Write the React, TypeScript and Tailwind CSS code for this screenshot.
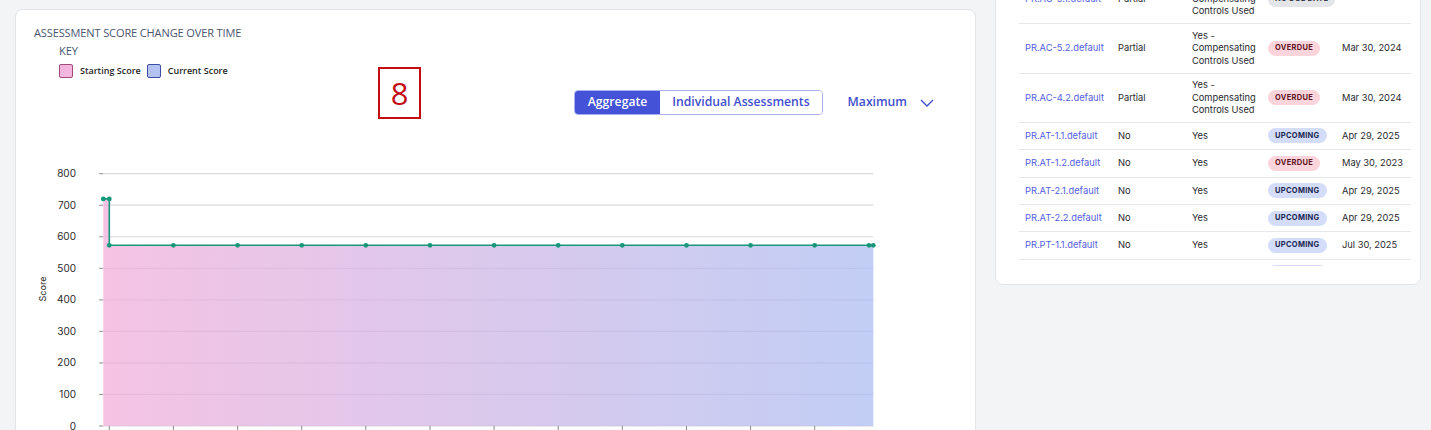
import React from "react";

const rows = [
  { id: "PR.AC-5.1.default", impl: "Partial", rem: "Yes - Compensating Controls Used", status: "NO DUE DATE", date: "" },
  { id: "PR.AC-5.2.default", impl: "Partial", rem: "Yes - Compensating Controls Used", status: "OVERDUE", date: "Mar 30, 2024" },
  { id: "PR.AC-4.2.default", impl: "Partial", rem: "Yes - Compensating Controls Used", status: "OVERDUE", date: "Mar 30, 2024" },
  { id: "PR.AT-1.1.default", impl: "No", rem: "Yes", status: "UPCOMING", date: "Apr 29, 2025" },
  { id: "PR.AT-1.2.default", impl: "No", rem: "Yes", status: "OVERDUE", date: "May 30, 2023" },
  { id: "PR.AT-2.1.default", impl: "No", rem: "Yes", status: "UPCOMING", date: "Apr 29, 2025" },
  { id: "PR.AT-2.2.default", impl: "No", rem: "Yes", status: "UPCOMING", date: "Apr 29, 2025" },
  { id: "PR.PT-1.1.default", impl: "No", rem: "Yes", status: "UPCOMING", date: "Jul 30, 2025" },
  { id: "PR.PT-2.1.default", impl: "No", rem: "Yes", status: "UPCOMING", date: "Jul 30, 2025" },
];

function Badge({ status }: { status: string }) {
  const cls =
    status === "OVERDUE"
      ? "bg-[#fcd4dc] text-[#5e1423]"
      : status === "UPCOMING"
      ? "bg-[#d3ddf9] text-[#1c2753]"
      : "bg-[#e4e5e9] text-[#3a3f4a]";
  return (
    <span className={`inline-flex items-center whitespace-nowrap h-[15px] px-[7px] rounded-full text-[7.5px] font-bold tracking-[0.04em] ${cls}`}>
      {status}
    </span>
  );
}

const Y0 = 264;
const K = 0.3154;
const yv = (v: number) => Y0 - v * K;
const xs = [79.3, 143.4, 207.6, 271.7, 335.8, 400, 464.1, 528.2, 592.3, 656.5, 720.6, 784.7];

function Chart() {
  const y720 = yv(720);
  const y573 = yv(573);
  const left = 73.3;
  const right = 843.3;
  const linePts: [number, number][] = [
    [left, y720],
    [79.3, y720],
    [79.3, y573],
    ...xs.slice(1).map((x) => [x, y573] as [number, number]),
    [839, y573],
    [right, y573],
  ];
  const lineD = linePts.map((p, i) => `${i === 0 ? "M" : "L"}${p[0]},${p[1]}`).join(" ");
  const areaD = `${lineD} L${right},${Y0} L${left},${Y0} Z`;
  const ticks = [0, 100, 200, 300, 400, 500, 600, 700, 800];
  return (
    <svg width="860" height="270" className="block" style={{ fontFamily: "Inter, 'Liberation Sans', sans-serif" }}>
      <defs>
        <linearGradient id="area" x1="0" y1="0" x2="1" y2="0">
          <stop offset="0%" stopColor="#f5c3e4" />
          <stop offset="50%" stopColor="#dac9ec" />
          <stop offset="100%" stopColor="#c2cef5" />
        </linearGradient>
      </defs>
      {ticks.map((t) => (
        <line key={"g" + t} x1={70} x2={843.3} y1={yv(t)} y2={yv(t)} stroke="#e6e6e8" strokeWidth={1.2} />
      ))}
      <path d={areaD} fill="url(#area)" />
      {ticks.map((t) => (
        <line key={"go" + t} x1={left} x2={843.3} y1={yv(t)} y2={yv(t)} stroke="rgba(80,60,110,0.07)" strokeWidth={1.2} />
      ))}
      {ticks.map((t) => (
        <g key={"t" + t}>
          <line x1={69} x2={73} y1={yv(t)} y2={yv(t)} stroke="#9a9a9a" strokeWidth={1} />
          <text x={46} y={yv(t) + 3.5} textAnchor="end" fontSize="10" fill="#2b2b2b">
            {t}
          </text>
        </g>
      ))}
      {xs.map((x) => (
        <line key={"xt" + x} x1={x} x2={x} y1={Y0} y2={Y0 + 6} stroke="#8a8a8a" strokeWidth={1} />
      ))}
      <text x={0} y={0} transform="translate(15.5,127) rotate(-90)" textAnchor="middle" fontSize="9" fill="#2b2b2b">
        Score
      </text>
      <path d={lineD} fill="none" stroke="#17977a" strokeWidth={1.6} />
      {linePts.map((p, i) => (
        <circle key={"c" + i} cx={p[0]} cy={p[1]} r={2.4} fill="#17977a" />
      ))}
    </svg>
  );
}

export default function App() {
  return (
    <div className="w-[1431px] h-[430px] overflow-hidden bg-[#f3f4f6] flex items-start">
      <div className="ml-[15px] mt-[9px] w-[961px] h-[440px] shrink-0 bg-white border border-[#e2e4e8] rounded-[8px] relative" style={{ fontFamily: "'Open Sans', 'Liberation Sans', sans-serif" }}>
        <div className="pl-[18px] pt-[16px]">
          <div className="text-[11px] leading-[14px] text-[#4a5670] tracking-[-0.01em]">ASSESSMENT SCORE CHANGE OVER TIME</div>
          <div className="ml-[25px] mt-[5px] text-[11px] leading-[12px] text-[#4a5670]">KEY</div>
          <div className="ml-[25px] mt-[7px] flex items-center h-[14px] text-[9px] font-semibold text-[#1f1f1f]">
            <span className="w-[14px] h-[14px] rounded-[2px] bg-[#f3b6df] border-[1.5px] border-[#a24a78]" />
            <span className="ml-[7px]">Starting Score</span>
            <span className="ml-[6px] w-[14px] h-[14px] rounded-[2px] bg-[#b5c3f3] border-[1.5px] border-[#3c4fa6]" />
            <span className="ml-[7px]">Current Score</span>
          </div>
        </div>
        <div className="mt-[12px] flex justify-end items-center pr-[41px]">
          <div className="flex h-[25px] rounded-[4px] border border-[#a9b1ee] overflow-hidden text-[12.2px] font-semibold">
            <div className="bg-[#4452d8] text-white px-[13px] flex items-center">Aggregate</div>
            <div className="bg-white text-[#3f4fcf] px-[12px] flex items-center">Individual Assessments</div>
          </div>
          <div className="ml-[25px] text-[12.2px] font-semibold text-[#3f4fcf]">Maximum</div>
          <svg className="ml-[13px]" width="14" height="8" viewBox="0 0 14 8">
            <path d="M1 1 L7 7 L13 1" fill="none" stroke="#4350d0" strokeWidth="1.4" />
          </svg>
        </div>
        <div className="ml-[14px] mt-[47px]">
          <Chart />
        </div>
        <div className="absolute left-[362px] top-[57px] w-[43px] h-[52px] border-2 border-[#c40d12] flex items-center justify-center text-[31px] leading-none text-[#c40d12]" style={{ fontFamily: "'Open Sans', sans-serif" }}>
          8
        </div>
      </div>
      <div className="ml-[19px] -mt-[30px] w-[426px] h-[315px] shrink-0 bg-white border border-[#e2e4e8] rounded-[8px] pt-[4px] pl-[23px] pr-[9px] pb-[17px]" style={{ fontFamily: "Inter, 'Liberation Sans', sans-serif" }}>
        <div className="h-[291px] overflow-hidden">
          {rows.map((r) => (
            <div key={r.id} className="grid grid-cols-[93px_74px_76px_74px_75px] border-b border-[#e6e7ea] py-[5.7px] items-center text-[9.3px] leading-[12.3px]">
              <div className="px-[6px] text-[#5360e2] whitespace-nowrap">{r.id}</div>
              <div className="px-[6px] text-[#2a2a2e]">{r.impl}</div>
              <div className="px-[6px] text-[#2a2a2e]">
                {r.rem === "Yes" ? "Yes" : (
                  <>
                    Yes -<br />Compensating<br />Controls Used
                  </>
                )}
              </div>
              <div className="px-[6px] flex"><Badge status={r.status} /></div>
              <div className="px-[6px] text-[#2a2a2e] whitespace-nowrap">{r.date}</div>
            </div>
          ))}
        </div>
      </div>
    </div>
  );
}
